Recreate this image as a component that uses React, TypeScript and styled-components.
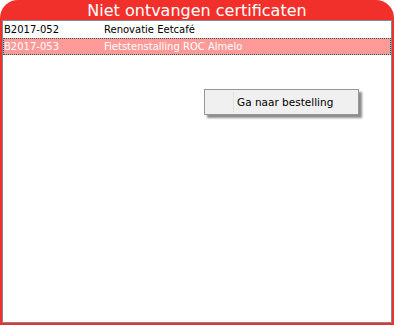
import styled, { createGlobalStyle } from "styled-components";

const Global = createGlobalStyle`
  html, body { margin: 0; padding: 0; background: #ffffff; }
  body { font-family: "DejaVu Sans", Verdana, sans-serif; }
`;

const Frame = styled.div`
  position: relative;
  width: 394px;
  height: 325px;
  box-sizing: border-box;
  background: #f2302b;
  border-radius: 18px 18px 0 0;
  padding: 0 2px 2px 2px;
  display: flex;
  flex-direction: column;
`;

const Title = styled.div`
  height: 20px;
  line-height: 22px;
  color: #ffffff;
  font-size: 16px;
  text-align: center;
`;

const List = styled.div`
  flex: 1;
  background: #ffffff;
  border: 1px solid #7f8a92;
  display: flex;
  flex-direction: column;
`;

const Row = styled.div<{ $selected?: boolean }>`
  display: flex;
  height: 17px;
  box-sizing: border-box;
  align-items: center;
  font-size: 10px;
  color: ${(p) => (p.$selected ? "#ffffff" : "#000000")};
  background: ${(p) => (p.$selected ? "#ff9a98" : "transparent")};
  border: 1px ${(p) => (p.$selected ? "dotted #2d5a5a" : "solid transparent")};
  padding-left: 0;
`;

const Cell = styled.div<{ $w?: number }>`
  width: ${(p) => (p.$w ? `${p.$w}px` : "auto")};
  flex: ${(p) => (p.$w ? "none" : "1")};
  white-space: nowrap;
`;

const Menu = styled.div`
  position: absolute;
  left: 204px;
  top: 89px;
  width: 155px;
  height: 26px;
  box-sizing: border-box;
  background: #f0f0f0;
  border: 1px solid #979797;
  box-shadow: 3px 3px 2px rgba(0, 0, 0, 0.45);
  display: flex;
  align-items: stretch;
  padding: 2px;
`;

const IconCol = styled.div`
  width: 26px;
  border-right: 1px solid #e2e2e2;
`;

const MenuItem = styled.div`
  display: flex;
  align-items: center;
  padding-left: 3px;
  font-size: 10.5px;
  color: #000000;
`;

export default function App() {
  return (
    <>
      <Global />
      <Frame>
        <Title>Niet ontvangen certificaten</Title>
        <List>
          <Row>
            <Cell $w={100}>B2017-052</Cell>
            <Cell>Renovatie Eetcafé</Cell>
          </Row>
          <Row $selected>
            <Cell $w={100}>B2017-053</Cell>
            <Cell>Fietstenstalling ROC Almelo</Cell>
          </Row>
        </List>
        <Menu>
          <IconCol />
          <MenuItem>Ga naar bestelling</MenuItem>
        </Menu>
      </Frame>
    </>
  );
}
